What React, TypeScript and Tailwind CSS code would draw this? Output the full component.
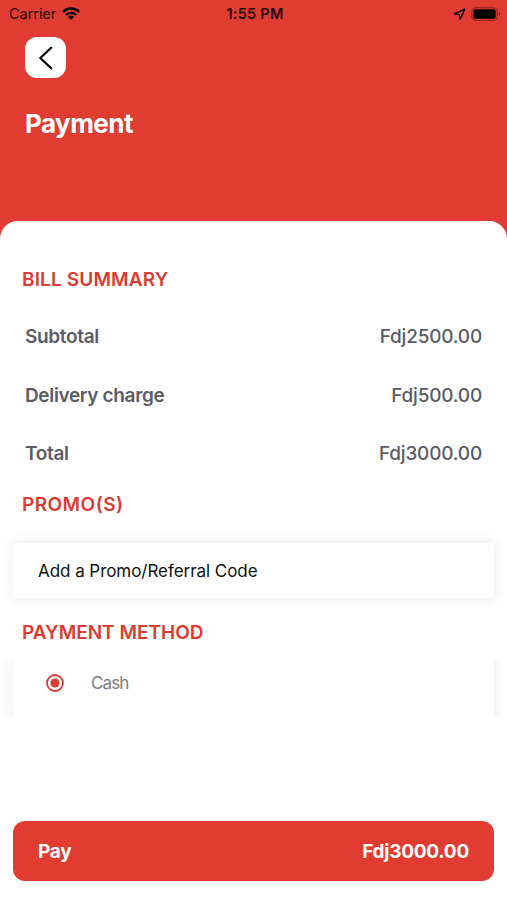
const bill = [
  { label: 'Subtotal', amount: 'Fdj2500.00' },
  { label: 'Delivery charge', amount: 'Fdj500.00' },
  { label: 'Total', amount: 'Fdj3000.00' },
];

function StatusBar() {
  return (
    <div className="grid h-7 grid-cols-3 items-center pl-[9px] pr-[6px] text-black">
      <div className="flex items-center gap-[6px]">
        <span className="text-[14.5px] leading-7 tracking-[-0.05px] opacity-85">Carrier</span>
        <svg width="18" height="13" viewBox="0 0 18 13" className="-mt-[2px]">
          <g fill="none" stroke="currentColor" strokeWidth="2.4">
            <path d="M0.9 4.8a11.6 11.6 0 0 1 16.2 0" />
            <path d="M3.8 8a7.5 7.5 0 0 1 10.4 0" />
          </g>
          <path d="M9 12.8 6 9.9a4.3 4.3 0 0 1 6 0Z" fill="currentColor" />
        </svg>
      </div>
      <span className="text-center text-[14.5px] font-semibold leading-7 tracking-[0.25px] opacity-85">
        1:55 PM
      </span>
      <div className="flex items-center justify-end gap-[5px]">
        <svg width="13" height="13" viewBox="0 0 13 13" fill="none">
          <path
            d="M11.7 1.2 1.5 5.8l4.8.6.9 4.9Z"
            stroke="currentColor"
            strokeWidth="1.4"
            strokeLinejoin="round"
          />
        </svg>
        <svg width="30" height="14" viewBox="0 0 30 14" className="-mt-px">
          <rect x="0.7" y="0.7" width="25.6" height="12.6" rx="3.6" fill="none" stroke="#000" strokeOpacity="0.4" />
          <rect x="2.3" y="2.3" width="22.4" height="9.4" rx="2" fill="#000" />
          <path d="M27.8 4.9v4.2c1.8-.8 1.8-3.4 0-4.2Z" fill="#000" fillOpacity="0.4" />
        </svg>
      </div>
    </div>
  );
}

function SectionTitle({ children, className }: { children: string; className: string }) {
  return (
    <h2 className={`px-[22px] text-[19px] font-semibold leading-6 text-[#dc3b32] ${className}`}>
      {children}
    </h2>
  );
}

export default function App() {
  return (
    <div className="flex h-[900px] w-full flex-col overflow-hidden bg-[#e03c32] font-['Inter','Liberation_Sans',sans-serif]">
      <StatusBar />
      <header className="h-[193px] px-[25px] pt-[9px]">
        <button className="flex size-[41px] items-center justify-center rounded-[12px] bg-white">
          <svg width="14" height="24" viewBox="0 0 14 24" fill="none">
            <path
              d="M12.2 1.7 1.3 12l10.9 10.3"
              stroke="#000"
              strokeWidth="2.2"
              strokeLinecap="round"
              strokeLinejoin="round"
            />
          </svg>
        </button>
        <h1 className="mt-[30px] text-[26px] font-bold leading-8 tracking-[-0.55px] text-white">
          Payment
        </h1>
      </header>

      <main className="flex-1 rounded-t-[18px] bg-white pt-[47px]">
        <SectionTitle className="tracking-[0.15px]">BILL SUMMARY</SectionTitle>
        <div className="mt-4 px-[25px] text-[19px] text-[#5b5b63]">
          {bill.map(({ label, amount }) => (
            <div key={label} className="flex h-[58.5px] items-center justify-between">
              <span className="font-semibold tracking-[-0.35px]">{label}</span>
              <span className="font-medium tracking-[-0.2px]">{amount}</span>
            </div>
          ))}
        </div>

        <div className="mt-[9.5px]">
          <SectionTitle className="tracking-[0.45px]">PROMO(S)</SectionTitle>
        </div>
        <div className="mx-[13px] mt-[26px] flex h-[55px] items-center rounded-[3px] bg-white px-[25px] shadow-[0_0_12px_2px_rgba(0,0,0,0.07)]">
          <span className="pt-[2px] text-[17px] tracking-[-0.05px] text-[#111]">
            Add a Promo/Referral Code
          </span>
        </div>

        <div className="mt-[23px]">
          <SectionTitle className="tracking-normal">PAYMENT METHOD</SectionTitle>
        </div>
        <div className="mt-[15px] overflow-hidden px-[13px]">
          <div className="flex h-[57px] items-start bg-white pl-[33px] pt-[11px] shadow-[0_0_12px_2px_rgba(0,0,0,0.07)]">
            <svg width="18" height="24" viewBox="0 0 18 24">
              <circle cx="9" cy="12" r="8" fill="none" stroke="#dc3b32" strokeWidth="1.8" />
              <circle cx="9" cy="12" r="4.6" fill="#dc3b32" />
            </svg>
            <span className="ml-[27px] text-[17px] leading-6 tracking-[-0.9px] text-[#7c7c80]">
              Cash
            </span>
          </div>
        </div>

        <button className="mx-[13px] mt-[104px] flex h-[60px] w-[481px] items-center justify-between rounded-[12px] bg-[#e03c32] px-[25px] pt-[2px] text-[19px] font-bold tracking-[-0.25px] text-white">
          <span>Pay</span>
          <span>Fdj3000.00</span>
        </button>
      </main>
    </div>
  );
}
